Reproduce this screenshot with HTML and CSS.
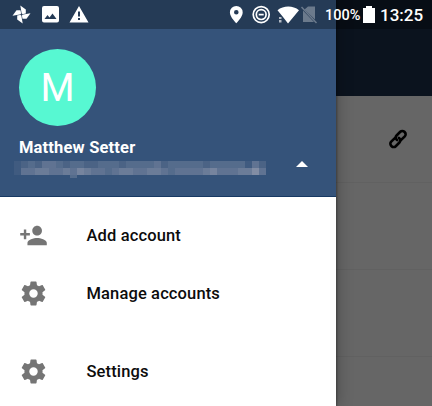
FILE: index.html
```html
<!DOCTYPE html>
<html lang="en">
<head>
<meta charset="utf-8">
<title>Accounts</title>
<link rel="stylesheet" href="styles.css">
</head>
<body>
<div class="screen">
  <aside class="drawer">
    <header class="profile">
      <div class="avatar">M</div>
      <div class="name">Matthew Setter</div>
      <div class="redacted" aria-hidden="true"><svg width="252" height="17" id="mosaic" shape-rendering="crispEdges"></svg></div>
      <i class="caret"></i>
    </header>
    <nav class="menu">
      <a class="item"><svg class="icon" viewBox="0 0 24 24"><path d="M15 12c2.21 0 4-1.79 4-4s-1.79-4-4-4-4 1.79-4 4 1.790 4 4 4zm-9-2V7H4v3H1v2h3v3h2v-3h3v-2H6zm9 4c-2.670 0-8 1.340-8 4v2h16v-2c0-2.660-5.330-4-8-4z"/></svg><span>Add account</span></a>
      <a class="item"><svg class="icon" viewBox="0 0 24 24"><use href="#gear"/></svg><span>Manage accounts</span></a>
      <a class="item item-settings"><svg class="icon" viewBox="0 0 24 24"><path id="gear" d="M19.430 12.980c.04-.32.07-.64.07-.98s-.03-.66-.07-.98l2.110-1.650c.19-.15.24-.42.12-.64l-2-3.460c-.12-.22-.39-.3-.61-.22l-2.490 1c-.52-.4-1.080-.73-1.690-.98l-.38-2.650C14.460 2.180 14.250 2 14 2h-4c-.25 0-.46.18-.49.42l-.38 2.650c-.61.25-1.170.59-1.690.98l-2.490-1c-.23-.09-.49 0-.61.22l-2 3.460c-.13.22-.07.49.12.64l2.110 1.650c-.04.32-.07.65-.07.98s.03.66.07.98l-2.110 1.650c-.19.15-.24.42-.12.64l2 3.460c.12.22.39.3.61.22l2.490-1c.52.4 1.080.73 1.690.98l.38 2.650c.03.24.24.42.49.42h4c.25 0 .46-.18.49-.42l.38-2.650c.61-.25 1.170-.59 1.690-.98l2.490 1c.23.09.49 0 .61-.22l2-3.460c.12-.22.07-.49-.12-.64zM12 15.500a3.500 3.500 0 1 1 0-7 3.500 3.500 0 0 1 0 7z"/></svg><span>Settings</span></a>
    </nav>
  </aside>
  <main class="behind">
    <div class="toolbar"></div>
    <div class="row row-first"><svg class="link" viewBox="-10 -10 20 20"><g transform="rotate(-45)" fill="none" stroke="#000" stroke-width="2.600" stroke-linecap="round"><path d="M1.200 2.900H6.700a2.900 2.900 0 0 0 2.900-2.900v-.6a2.900 2.900 0 0 0-2.900-2.900H1.500a2.900 2.900 0 0 0-2.900 2.900v.8"/><path d="M-1.200-2.900H-6.700a2.900 2.900 0 0 0-2.900 2.900v.6a2.900 2.900 0 0 0 2.900 2.900H-1.500a2.900 2.900 0 0 0 2.900-2.900v-.8"/></g></svg></div>
    <div class="row"></div>
    <div class="row"></div>
    <div class="row"></div>
  </main>
  <div class="status">
    <svg class="glyphs" width="432" height="29" fill="#fff">
      <g transform="translate(21.500 14.500)"><path id="blade" d="M.3-.3L-1.200-9 4.300-5V-1z"/><use href="#blade" transform="rotate(90)"/><use href="#blade" transform="rotate(180)"/><use href="#blade" transform="rotate(270)"/><circle r="1" fill="#293b56"/></g>
      <path fill-rule="evenodd" d="M44 6h13a2 2 0 0 1 2 2v12.500a2 2 0 0 1-2 2H44a2 2 0 0 1-2-2V8a2 2 0 0 1 2-2zM44.500 19h12l-4-5.500-3 4-2-2.500z"/>
      <path fill-rule="evenodd" d="M79 6l9.500 16.500h-19zM78 11.500v5h2v-5zm0 6.500v2h2v-2z"/>
      <path fill-rule="evenodd" d="M236.300 6a6.400 6.400 0 0 0-6.400 6.400c0 4.500 6.400 10.800 6.400 10.800s6.400-6.300 6.400-10.800A6.400 6.400 0 0 0 236.300 6zm0 4a2.300 2.300 0 1 1 0 4.600 2.300 2.300 0 0 1 0-4.600z"/>
      <g fill="none" stroke="#fff" stroke-width="1.700"><circle cx="261.200" cy="14.600" r="8"/><circle cx="261.200" cy="14.600" r="4.900"/><path d="M258.700 14.600h5"/></g>
      <path d="M277.500 10.200c6-5 15.500-5 21.500 0L288 23.500l-5-6.500z"/><path d="M279 17h2.500v2H279zm0 3h2.500v2.500H279z" opacity=".65"/>
      <g opacity=".32"><path d="M308 6.500h7v13L304.500 9.500zM303 10.500l11 11.500h-11z"/><path d="M301.500 7l15 16" stroke="#fff" stroke-width="1.500"/></g>
      <path d="M363 8h3V6h6v2h3v15h-12z"/>
    </svg>
    <span class="battery">100%</span>
    <span class="clock">13:25</span>
  </div>
</div>
<script src="mosaic.js"></script>
</body>
</html>
```
FILE: styles.css
```css
* { box-sizing: border-box; }
body { margin: 0; font-family: Roboto, "Liberation Sans", sans-serif; }
.screen { position: relative; display: flex; width: 432px; height: 406px; overflow: hidden; background: #666; }
.drawer { position: relative; z-index: 1; width: 336px; background: #fff; box-shadow: 1px 0 2px rgba(0,0,0,.3), 2px 0 14px rgba(0,0,0,.25); }
.profile { position: relative; height: 197px; padding: 49px 0 0 19px; background: #35537a; border-bottom: 1px solid #173963; color: #fff; }
.avatar { width: 77px; height: 77px; border-radius: 50%; background: #57f8d2; font-size: 39px; line-height: 78px; text-align: center; }
.name { margin-top: 11px; font-size: 16.500px; font-weight: 700; line-height: 22px; letter-spacing: .17px; }
.redacted { height: 17px; margin: 2px 0 0 -5px; }
.redacted svg { display: block; }
.caret { position: absolute; left: 296px; top: 161px; border: 6px solid transparent; border-top: 0; border-bottom-color: #fff; }
.menu { padding-top: 10px; }
.item { display: flex; align-items: center; height: 57.500px; padding-left: 19px; color: #0c0c0c; font-size: 16.500px; font-weight: 500; letter-spacing: .13px; }
.item span { margin-left: 38.500px; }
.item-settings { margin-top: 21px; }
.icon { width: 29px; height: 29px; fill: #757575; }
.behind { flex: 1; }
.toolbar { height: 96px; background: #0b131e; }
.row { height: 87px; border-bottom: 1px solid #616161; }
.row-first { padding: 33px 0 0 52px; }
.link { display: block; width: 20px; height: 20px; overflow: visible; }
.status { position: absolute; z-index: 2; inset: 0 0 auto; height: 29px; background: rgba(0,0,0,.29); color: #fff; }
.glyphs { position: absolute; left: 0; top: 0; }
.battery, .clock { position: absolute; top: 0; line-height: 30px; font-weight: 500; }
.battery { left: 325px; top: 1px; font-size: 14.500px; }
.clock { left: 380px; font-size: 17px; }
```
FILE: mosaic.js
```js
const mosaic = document.getElementById('mosaic');
const rows = [
  { y: 0, h: 7, levels: '123244323322333233334233333233333142' },
  { y: 7, h: 7, levels: '144554454654434554455434444564445574' },
  { y: 14, h: 3, levels: '000000003000000000000000000000000000' }
];
rows.forEach(({ y, h, levels }) => {
  [...levels].forEach((level, i) => {
    const cell = document.createElementNS('http://www.w3.org/2000/svg', 'rect');
    Object.entries({ x: i * 7, y, width: 7, height: h, fill: '#d2c9d0', 'fill-opacity': level * 0.07 })
      .forEach(([key, value]) => cell.setAttribute(key, value));
    mosaic.append(cell);
  });
});
```
